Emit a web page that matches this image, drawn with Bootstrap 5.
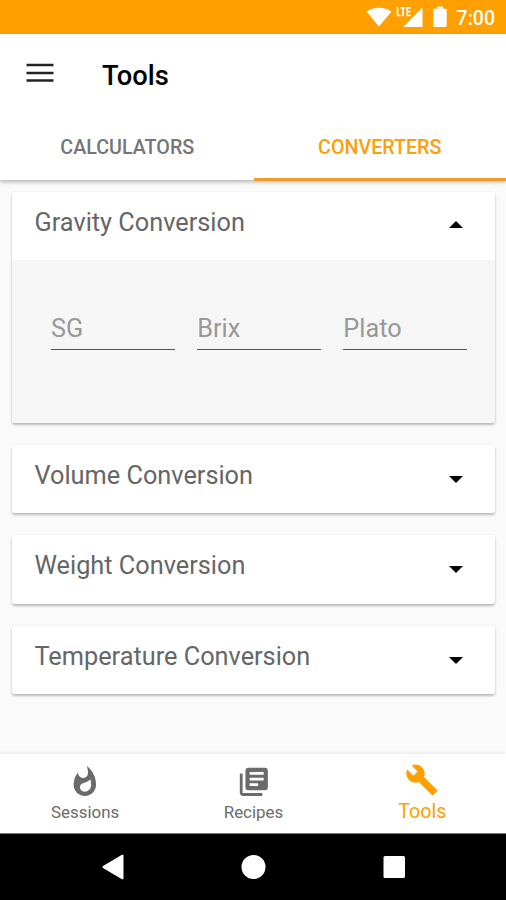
<!DOCTYPE html>
<html lang="en">
<head>
<meta charset="utf-8">
<meta name="viewport" content="width=device-width, initial-scale=1">
<title>Tools</title>
<link href="https://cdn.jsdelivr.net/npm/bootstrap@5.3.0/dist/css/bootstrap.min.css" rel="stylesheet">
<style>
  :root { --amber: #ffa000; }
  body { font-family: Roboto, sans-serif; background: #fafafa; height: 900px; overflow: hidden; color: #000; }
  svg { display: block; flex: none; }
  .status-bar { height: 34px; background: var(--amber); color: #fff; padding-right: 11px; }
  .status-bar .clock { font-size: 19.5px; font-weight: 500; line-height: 34px; padding-top: 3px; margin-left: 9px; }
  .app-head { height: 146px; background: #fff; box-shadow: 0 2px 4px rgba(0,0,0,.28); z-index: 1; }
  .app-title { height: 80px; padding-left: 26px; }
  .app-title h1 { font-size: 27.3px; font-weight: 500; line-height: 32px; margin-left: 48px; padding-top: 3px; }
  .app-title svg { margin-top: -2px; }
  .tab-strip { height: 67px; padding-left: 1px; }
  .tab-strip .nav-link { font-size: 19.7px; font-weight: 500; line-height: 24px; color: #757575; padding: 22px 0 0; border-radius: 0; border-bottom: 3px solid transparent; }
  .tab-strip .nav-link.active { color: #ff9d0a; border-bottom-color: #f09c2c; }
  .panels { padding: 12px 11px 0 12px; gap: 22.3px; }
  .panel { border: 0; border-radius: 3px; box-shadow: 0 2px 2.5px rgba(0,0,0,.25), 0 0 2px rgba(0,0,0,.08); overflow: hidden; }
  .panel-head { height: 68.2px; padding: 0 32.5px 0 22.5px; font-size: 25.3px; line-height: 30px; color: #666; background: #fff; border: 0; }
  .panel-head span { margin-top: -7px; }
  .panel-body { height: 162.5px; background: #f6f6f6; padding: 52px 28px 0 39px; gap: 22.5px; }
  .panel-body .form-control { flex: 1 1 0; min-width: 0; height: 38px; font-size: 25.3px; line-height: 30px; padding: 0 0 5px; border: 0; border-bottom: 1.5px solid #555; border-radius: 0; background: transparent; }
  .panel-body .form-control::placeholder { color: #999; opacity: 1; }
  .bottom-nav { height: 79px; background: #fff; box-shadow: 0 -1px 3px rgba(0,0,0,.08); padding-left: 1px; }
  .bottom-nav .nav-link { padding: 11px 0 0; color: #6b6b6b; font-size: 16.9px; line-height: 20px; }
  .bottom-nav .nav-link span { margin-top: 3px; }
  .bottom-nav .nav-link.active { color: var(--amber); font-size: 19.7px; padding: 9px 0 0 1px; }
  .bottom-nav .nav-link.active span { margin-top: 5px; }
  .system-nav { height: 67px; background: #000; border-top: 1px solid #777; }
</style>
<script src="https://cdn.jsdelivr.net/npm/bootstrap@5.3.0/dist/js/bootstrap.bundle.min.js"></script>
</head>
<body class="d-flex flex-column m-0">

<div class="status-bar d-flex align-items-center justify-content-end">
  <svg width="26" height="20" viewBox="0 0 26 20" fill="#fff"><path d="M.5 4.600C7.500-.6 18.500-.6 25.500 4.600L13 19.500z"/></svg>
  <svg class="ms-1" width="28" height="22" viewBox="-.500 0 28 22"><path fill="#fff" d="M26 1.500v19.500H6.500z"/><path fill="none" stroke="#fff" stroke-width="1.700" d="M1 1v8.500h3.400M4 1.900h5M6.500 1.900v8.400M14.500 1.900H10.700v7.600H14.500M10.700 5.600h3.300"/></svg>
  <svg class="ms-2" width="16" height="22" viewBox="0 0 16 22" fill="#fff"><path d="M5 .5h6v2.300h2.300c.8 0 1.400.6 1.400 1.400v15.400c0 .8-.6 1.400-1.400 1.400H2.700c-.8 0-1.400-.6-1.400-1.400V4.200c0-.8.6-1.400 1.400-1.400H5z"/></svg>
  <span class="clock">7:00</span>
</div>

<header class="app-head position-relative">
  <div class="app-title d-flex align-items-center">
    <svg width="28" height="20" viewBox="0 0 28 20"><path d="M.5 2h27M.5 10h27M.5 17.500h27" stroke="#222" stroke-width="2.400"/></svg>
    <h1 class="mb-0">Tools</h1>
  </div>
  <nav class="tab-strip nav nav-fill">
    <a class="nav-link nav-item w-50 text-center" href="#">CALCULATORS</a>
    <a class="nav-link nav-item w-50 text-center active" href="#">CONVERTERS</a>
  </nav>
</header>

<main class="panels d-flex flex-column flex-grow-1">
  <section class="panel card">
    <div class="panel-head d-flex align-items-center justify-content-between">
      <span>Gravity Conversion</span>
      <svg class="mb-1" width="14" height="7" viewBox="0 0 14 7"><path d="M0 7L7 0l7 7z"/></svg>
    </div>
    <div class="panel-body d-flex">
      <input class="form-control" type="text" placeholder="SG" aria-label="SG">
      <input class="form-control" type="text" placeholder="Brix" aria-label="Brix">
      <input class="form-control" type="text" placeholder="Plato" aria-label="Plato">
    </div>
  </section>
  <section class="panel card">
    <div class="panel-head d-flex align-items-center justify-content-between">
      <span>Volume Conversion</span>
      <svg width="14" height="7" viewBox="0 0 14 7"><path d="M0 0l7 7 7-7z"/></svg>
    </div>
  </section>
  <section class="panel card">
    <div class="panel-head d-flex align-items-center justify-content-between">
      <span>Weight Conversion</span>
      <svg width="14" height="7" viewBox="0 0 14 7"><path d="M0 0l7 7 7-7z"/></svg>
    </div>
  </section>
  <section class="panel card">
    <div class="panel-head d-flex align-items-center justify-content-between">
      <span>Temperature Conversion</span>
      <svg width="14" height="7" viewBox="0 0 14 7"><path d="M0 0l7 7 7-7z"/></svg>
    </div>
  </section>
</main>

<nav class="bottom-nav nav nav-fill">
  <a class="nav-link nav-item col-4 d-flex flex-column align-items-center" href="#">
    <svg width="33.700" height="33.700" viewBox="0 0 24 24" fill="currentColor"><path d="M13.500.67s.74 2.650.74 4.800c0 2.060-1.350 3.730-3.410 3.730-2.070 0-3.630-1.670-3.630-3.730l.03-.36C5.210 7.510 4 10.620 4 14c0 4.420 3.580 8 8 8s8-3.580 8-8C20 8.610 17.410 3.800 13.500.67zM11.710 19c-1.780 0-3.220-1.400-3.220-3.140 0-1.620 1.050-2.760 2.810-3.120 1.770-.36 3.600-1.210 4.620-2.580.39 1.290.59 2.650.59 4.040 0 2.650-2.150 4.800-4.800 4.800z"/></svg>
    <span>Sessions</span>
  </a>
  <a class="nav-link nav-item col-4 d-flex flex-column align-items-center" href="#">
    <svg width="33.700" height="33.700" viewBox="0 0 24 24" fill="currentColor"><path d="M4 6H2v14c0 1.100.9 2 2 2h14v-2H4V6zm16-4H8c-1.100 0-2 .9-2 2v12c0 1.100.9 2 2 2h12c1.100 0 2-.9 2-2V4c0-1.100-.9-2-2-2zm-1 9H9V9h10v2zm-4 4H9v-2h6v2zm4-8H9V5h10v2z"/></svg>
    <span>Recipes</span>
  </a>
  <a class="nav-link nav-item col-4 d-flex flex-column align-items-center active" href="#">
    <svg width="33.700" height="33.700" viewBox="0 0 24 24" fill="currentColor"><path d="M22.700 19l-9.100-9.100c.9-2.300.4-5-1.500-6.900-2-2-5-2.400-7.400-1.300L9 6 6 9 1.600 4.700C.4 7.100.9 10.100 2.900 12.100c1.900 1.900 4.600 2.400 6.900 1.500l9.100 9.100c.4.4 1 .4 1.400 0l2.300-2.300c.5-.4.5-1.100.1-1.400z"/></svg>
    <span>Tools</span>
  </a>
</nav>

<footer class="system-nav d-flex align-items-center">
  <svg width="506" height="26" viewBox="0 0 506 26" fill="#fff"><path d="M103 12l19-11.200c.8-.4 1.500 0 1.500.8v22.800c0 .8-.7 1.200-1.500.8L103 14c-.7-.5-.7-1.500 0-2z"/><circle cx="253.500" cy="13" r="12"/><rect x="383.500" y="2" width="21.500" height="22" rx="1.500"/></svg>
</footer>
</body>
</html>
